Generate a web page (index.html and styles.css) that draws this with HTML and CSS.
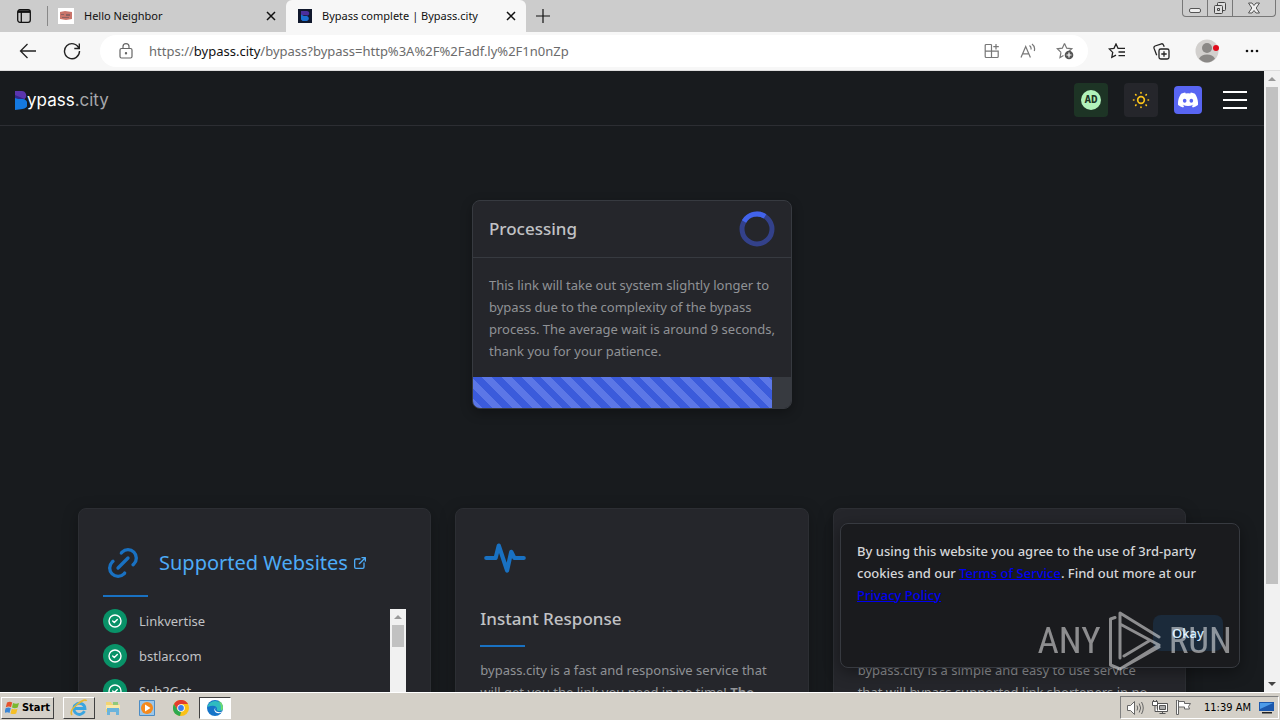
FILE: index.html
```html
<!DOCTYPE html>
<html lang="en">
<head>
<meta charset="utf-8">
<title>Bypass complete | Bypass.city</title>
<link rel="stylesheet" href="styles.css">
</head>
<body>
<div class="tabstrip">
  <button class="plain tab-menu" aria-label="Tab actions"><svg width="14" height="14" viewBox="0 0 14 14" fill="none" stroke="#111" stroke-width="1.3"><rect x=".7" y=".7" width="12.6" height="12.6" rx="2.2"/><path d="M1 2.6h12" stroke-width="2.6"/><path d="M4.3 3v10"/></svg></button>
  <div class="tab">
    <svg width="16" height="16" viewBox="0 0 16 16"><path fill="#fff" d="M0 0h16v16H0z"/><path fill="#c9746a" d="M2 4l5-1 7 1v7l-6 1-6-1z"/><path fill="#8d6060" d="M3 6h3v1H3zm5 0h4v2H8zM4 9h7v1H4z"/></svg>
    <span class="tab-title">Hello Neighbor</span>
    <button class="plain" aria-label="Close tab"><svg width="10" height="10" viewBox="0 0 10 10" stroke="#111" stroke-width="1.5"><path d="M1 1l8 8M9 1L1 9"/></svg></button>
  </div>
  <div class="tab tab-active">
    <svg width="14" height="14" viewBox="0 0 14 14"><path fill="#10182c" d="M0 0h14v14H0z"/><path fill="#4b2e9c" d="M3 2h5.500a2.400 2.400 0 0 1 1.500 4.500L3 6z"/><path fill="#1b6fd0" d="M3 5.500L6 7h3a2.600 2.600 0 0 1 0 5H4.500L3 10.500z"/></svg>
    <span class="tab-title">Bypass complete | Bypass.city</span>
    <button class="plain" aria-label="Close tab"><svg width="10" height="10" viewBox="0 0 10 10" stroke="#111" stroke-width="1.5"><path d="M1 1l8 8M9 1L1 9"/></svg></button>
  </div>
  <button class="plain new-tab" aria-label="New tab"><svg width="14" height="14" viewBox="0 0 14 14" stroke="#111" stroke-width="1.200"><path d="M7 0v14M0 7h14"/></svg></button>
  <div class="window-buttons">
    <button class="plain" aria-label="Minimize"><svg width="14" height="14" viewBox="0 0 14 14" fill="#eee" stroke="#555"><rect x="1.500" y="7.500" width="11" height="4" rx="1.500"/></svg></button>
    <button class="plain" aria-label="Restore"><svg width="14" height="14" viewBox="0 0 14 14" fill="#ddd" stroke="#444"><rect x="4.500" y="1.500" width="8" height="8" rx="1"/><rect x="1.500" y="4.500" width="8" height="8" rx="1"/><path d="M4.500 7.500h2v2h-2z"/></svg></button>
    <button class="plain wide" aria-label="Close"><svg width="14" height="14" viewBox="0 0 14 14" fill="#eee" stroke="#555"><path d="M1.500 2h3.500l2 2.500L9 2h3.500L9.200 7l3.300 5H9L7 9.500 5 12H1.500l3.300-5z"/></svg></button>
  </div>
</div>

<div class="toolbar">
  <button class="plain nav-btn" aria-label="Back"><svg width="18" height="16" viewBox="0 0 18 16" fill="none" stroke="#222" stroke-width="1.300"><path d="M17 8H1.500M8.500 1l-7 7 7 7"/></svg></button>
  <button class="plain nav-btn" aria-label="Refresh"><svg width="18" height="18" viewBox="0 0 18 18" fill="none" stroke="#222" stroke-width="1.400"><path d="M16 6.500A7.500 7.500 0 1 0 16.500 9M16.300 1.500v5h-5"/></svg></button>
  <div class="address">
    <svg width="14" height="16" viewBox="0 0 14 16" fill="none" stroke="#666" stroke-width="1.200"><rect x="1" y="5.500" width="12" height="9.500" rx="1.500"/><path d="M4 5.500V3.600a3 3 0 0 1 6 0v1.900"/><circle cx="7" cy="10.200" r=".6" fill="#666"/></svg>
    <div class="url" role="textbox" contenteditable="true" spellcheck="false" aria-label="Address">https://<span class="host">bypass.city</span>/bypass?bypass=http%3A%2F%2Fadf.ly%2F1n0nZp</div>
    <button class="plain" aria-label="Apps"><svg width="16" height="16" viewBox="0 0 16 16" fill="none" stroke="#777" stroke-width="1.200"><path d="M7.500 1.500H2.200a1 1 0 0 0-1 1v11a1 1 0 0 0 1 1h11a1 1 0 0 0 1-1V8.200H1.200M7.500 1.500v13M12 1v5.500M9.300 3.700h5.500"/></svg></button>
    <button class="plain" aria-label="Read aloud"><svg width="16" height="16" viewBox="0 0 16 16" fill="none" stroke="#777" stroke-width="1.200"><path d="M1 14.500L5.700 3.500l4.700 11M2.700 10.800h6M9.500 2.500q2 1.500 1.500 4M12 1q3.500 2.500 2.300 7"/></svg></button>
    <button class="plain" aria-label="Add favorite"><svg width="18" height="18" viewBox="0 0 18 18" fill="none" stroke="#777" stroke-width="1.200"><path d="M8.500 1.500l2.200 4.700 5.100.6-3.800 3.500M5 10.400L1.300 6.800l5-.6 2.200-4.700M5 10.400L4 15.500l3.500-2"/><circle cx="13" cy="13" r="4.300" fill="#555" stroke="none"/><path d="M13 10.500v5M10.500 13h5" stroke="#fff"/></svg></button>
  </div>
  <button class="plain tool" aria-label="Favorites"><svg width="18" height="16" viewBox="0 0 18 16" fill="none" stroke="#222" stroke-width="1.300"><path d="M10 5.300L8 1 6 5.300l-4.800.6 3.500 3.500-.9 5 4.200-2.300M9.500 5.300H17M10.500 9H17M10.500 12.700H17"/></svg></button>
  <button class="plain tool" aria-label="Collections"><svg width="17" height="17" viewBox="0 0 17 17" fill="none" stroke="#222" stroke-width="1.300"><rect x="6" y="6" width="10" height="10" rx="1.800"/><path d="M11 8.300v5.400M8.300 11h5.400M3.700 12.300L1 5.200Q.7 3.500 2 3l6.500-2.200q1.500-.2 2 1.200l.7 1.700"/></svg></button>
  <button class="plain tool" aria-label="Profile"><svg width="24" height="24" viewBox="0 0 24 24"><circle cx="12" cy="12" r="11.500" fill="#d2d0ce"/><circle cx="12" cy="9" r="5" fill="#8a8886"/><path d="M4 19.500q2.500-4 8-4t8 4q-3.500 4-8 4t-8-4z" fill="#8a8886"/><circle cx="21" cy="9" r="3" fill="#e00b1c"/></svg></button>
  <button class="plain tool" aria-label="Settings"><svg width="14" height="4" viewBox="0 0 14 4" fill="#111"><circle cx="2" cy="2" r="1.300"/><circle cx="7" cy="2" r="1.300"/><circle cx="12" cy="2" r="1.300"/></svg></button>
</div>

<div class="viewport">
  <div class="page">
    <header class="site-header">
      <a class="brand" href="#"><svg width="13" height="19" viewBox="0 0 13 19"><path fill="#5b35ad" d="M1 0h6.500a4.600 4.600 0 0 1 3 8.200L1 7z"/><path fill="#33278a" d="M1 4l9.500 4H1z"/><path fill="#1479e0" d="M1 7l3 1h4.500a4.800 4.800 0 0 1 0 10L1 19z"/></svg><span>ypass<span class="brand-dim">.city</span></span></a>
      <nav class="actions">
        <button class="square ad" aria-label="Ad settings"><span class="ad-badge"><b>AD</b></span></button>
        <button class="square theme" aria-label="Toggle theme"><svg width="20" height="20" viewBox="0 0 24 24" fill="none" stroke="#fcc419" stroke-width="2" stroke-linecap="round"><circle cx="12" cy="12" r="4"/><path d="M3 12h.5m8.500-9v.5m8.500 8.500h.5m-9 8.500v.5M5.600 5.600l.4.400m12.400-.400l-.4.400m0 12l.4.400m-12.800 0l.4-.400"/></svg></button>
        <a class="discord" href="#" aria-label="Discord"><svg width="20" height="16" viewBox="0 0 127 96"><path fill="#fff" d="M107.700 8.070A105.150 105.150 0 0 0 81.470 0a72.060 72.060 0 0 0-3.360 6.830 97.680 97.680 0 0 0-29.110 0A72.370 72.370 0 0 0 45.640 0a105.890 105.890 0 0 0-26.250 8.090C2.790 32.650-1.710 56.600.54 80.210a105.730 105.730 0 0 0 32.170 16.150 77.700 77.700 0 0 0 6.890-11.110 68.420 68.420 0 0 1-10.850-5.180c.91-.66 1.800-1.340 2.660-2a75.570 75.570 0 0 0 64.320 0c.87.71 1.760 1.390 2.660 2a68.680 68.680 0 0 1-10.870 5.190 77 77 0 0 0 6.890 11.100 105.250 105.250 0 0 0 32.190-16.140c2.640-27.380-4.510-51.110-18.900-72.150zM42.450 65.690C36.180 65.690 31 60 31 53s5-12.740 11.430-12.740S54 46 53.890 53s-5.050 12.690-11.440 12.690zm42.240 0C78.410 65.690 73.250 60 73.250 53s5-12.740 11.440-12.740S96.230 46 96.120 53s-5.040 12.690-11.430 12.690z"/></svg></a>
        <button class="plain burger" aria-label="Menu"><i></i><i></i><i></i></button>
      </nav>
    </header>

    <section class="status">
      <div class="status-head">
        <h1>Processing</h1>
        <svg width="36" height="36" viewBox="0 0 36 36" fill="none" stroke-width="5"><circle cx="18" cy="18" r="15" stroke="#33418a"/><path stroke="#4263eb" d="M5 10.500A15 15 0 0 1 26 5.300"/></svg>
      </div>
      <p>This link will take out system slightly longer to bypass due to the complexity of the bypass process. The average wait is around 9 seconds, thank you for your patience.</p>
      <div class="progress" role="progressbar" aria-label="Progress" aria-valuenow="94" aria-valuemin="0" aria-valuemax="100"><div class="bar" style="width:94%"></div></div>
    </section>

    <main class="features">
      <article class="card">
        <a class="supported" href="#">
          <svg width="40" height="40" viewBox="0 0 24 24" fill="none" stroke="#1971c2" stroke-width="2" stroke-linecap="round" stroke-linejoin="round"><path d="M9 15l6-6M11 6l.463-.536a5 5 0 0 1 7.071 7.072L18 13M13 18l-.397.534a5.068 5.068 0 0 1-7.127 0 4.972 4.972 0 0 1 0-7.071L6 11"/></svg>
          <span>Supported Websites</span>
          <svg width="16" height="16" viewBox="0 0 24 24" fill="none" stroke="#4dabf7" stroke-width="2" stroke-linecap="round" stroke-linejoin="round"><path d="M12 6H6a2 2 0 0 0-2 2v10a2 2 0 0 0 2 2h10a2 2 0 0 0 2-2v-6M11 13l9-9M15 4h5v5"/></svg>
        </a>
        <div class="rule"></div>
        <div class="site-box">
          <ul class="sites">
            <li><svg width="24" height="24" viewBox="0 0 24 24"><circle cx="12" cy="12" r="12" fill="#099268"/><g fill="none" stroke="#fff" stroke-width="1.400" stroke-linecap="round" stroke-linejoin="round"><circle cx="12" cy="12" r="6"/><path d="M9.700 12l1.600 1.600 3-3"/></g></svg>Linkvertise</li>
            <li><svg width="24" height="24" viewBox="0 0 24 24"><circle cx="12" cy="12" r="12" fill="#099268"/><g fill="none" stroke="#fff" stroke-width="1.400" stroke-linecap="round" stroke-linejoin="round"><circle cx="12" cy="12" r="6"/><path d="M9.700 12l1.600 1.600 3-3"/></g></svg>bstlar.com</li>
            <li><svg width="24" height="24" viewBox="0 0 24 24"><circle cx="12" cy="12" r="12" fill="#099268"/><g fill="none" stroke="#fff" stroke-width="1.400" stroke-linecap="round" stroke-linejoin="round"><circle cx="12" cy="12" r="6"/><path d="M9.700 12l1.600 1.600 3-3"/></g></svg>Sub2Get</li>
          </ul>
          <div class="scroll"><span class="arrow"></span><span class="thumb thumb-short"></span></div>
        </div>
      </article>
      <article class="card">
        <svg class="pulse" width="50" height="50" viewBox="0 0 24 24" fill="none" stroke="#1971c2" stroke-width="2" stroke-linecap="round" stroke-linejoin="round"><path d="M3 12h4.500L9 6l4 12 2-9 1.500 3H21"/></svg>
        <h2>Instant Response</h2>
        <div class="rule"></div>
        <p>bypass.city is a fast and responsive service that will get you the link you need in no time! <b>The</b></p>
      </article>
      <article class="card card-tail">
        <p>bypass.city is a simple and easy to use service that will bypass supported link shorteners in no</p>
      </article>
    </main>

    <div class="cookie" role="dialog" aria-label="Cookies">
      <p>By using this website you agree to the use of 3rd-party cookies and our <a href="#">Terms of Service</a>. Find out more at our <a href="#">Privacy Policy</a></p>
      <button class="okay">Okay</button>
    </div>
  </div>
  <div class="scroll"><span class="arrow"></span><span class="thumb thumb-long"></span><span class="arrow arrow-down"></span></div>
</div>

<footer class="taskbar">
  <button class="raised start"><svg width="15" height="14" viewBox="0 0 15 14"><path fill="#e5532d" d="M2 1.500q3-1.500 5.200 0L6 6.200Q4 5 .8 6.200z"/><path fill="#7ab82f" d="M8 2q3 1.400 6 0l-1.300 4.600q-3 1.300-5.700 0z"/><path fill="#3a86d6" d="M.6 7.200q3-1.300 5.200 0L4.500 12Q2.500 10.500-.6 12z"/><path fill="#f5bf25" d="M6.800 7.700q3 1.200 5.700 0l-1.300 4.700q-3 1.200-5.700 0z"/></svg>Start</button>
  <button class="raised task" aria-label="Internet Explorer"><svg width="18" height="18" viewBox="0 0 18 18" fill="none"><path d="M14.500 12.200A5.600 5.600 0 1 1 15 9.500H5" stroke="#3aa5e0" stroke-width="2.800"/><path d="M2 16Q-1 12 7 5.500T16.500 2" stroke="#e8b830" stroke-width="1.600"/></svg></button>
  <button class="plain task" aria-label="Explorer"><svg width="16" height="16" viewBox="0 0 16 16"><path fill="#f2d472" d="M1 2h5l1 2h7v8H1z"/><path fill="#8fc97a" d="M8 2h5v3H8z"/><path fill="#f9e9a8" d="M1 5h14v4H1z"/><path fill="#6bb4dc" d="M2 8h12v7h-3v-3H5v3H2z"/></svg></button>
  <button class="plain task" aria-label="Media Player"><svg width="16" height="16" viewBox="0 0 16 16"><path fill="#9cc7ea" stroke="#4c8cc4" d="M.5.5h15v15H.5z"/><circle cx="8" cy="8" r="6" fill="#f58a1d"/><path fill="#fff" d="M6 4.500l5.500 3.500L6 11.500z"/></svg></button>
  <button class="plain task" aria-label="Chrome"><svg width="16" height="16" viewBox="0 0 16 16"><circle cx="8" cy="8" r="8" fill="#fbc116"/><path fill="#e33b2e" d="M1 4.100A8 8 0 0 1 15 4H8L4.500 10z"/><path fill="#2da94f" d="M1 4.100L4.600 10 8 12l-1 4A8 8 0 0 1 1 4.100z"/><circle cx="8" cy="8" r="3.800" fill="#fff"/><circle cx="8" cy="8" r="2.900" fill="#3b7ded"/></svg></button>
  <button class="plain task pressed" aria-label="Edge"><svg width="16" height="16" viewBox="0 0 16 16"><circle cx="8" cy="8" r="8" fill="#1674c8"/><path fill="#2fbcc0" d="M.3 7A8 8 0 0 1 16 8q-.3 3.200-4 3-3-.3-2-2.300Q9 4 .3 7z"/><path fill="#6fdc6b" d="M11 .6A8 8 0 0 1 16 8q-.3 2-2 2.700Q14.500 4 11 .6z"/><path fill="#fff" d="M8.500 7.500Q7 10.500 10 11.800q3 1 5.200-.4l-.7 1.200Q11 14 8.500 12.200 6.300 10 8.500 7.500z"/></svg></button>
  <div class="tray">
    <svg width="17" height="14" viewBox="0 0 17 14" fill="#fff" stroke="#666"><path d="M.5 4.500h3l4-4v13l-4-4h-3z"/><path fill="none" d="M10 4.500q1.500 2.500 0 5M12.200 2.500q3 4.500 0 9M14.500 1q3.500 6 0 12"/></svg>
    <svg width="16" height="15" viewBox="0 0 16 15" fill="#fff" stroke="#555"><path d="M5.500 3.500h10v8h-10z"/><path fill="#aaa" d="M7.500 5.500h6v4h-6z"/><path d="M7.500 13.500h6M10.500 12v2M.5 1.500h5v4h-5zM1.500 0v2M4.500 0v2M3 6v5.500h3"/></svg>
    <svg width="16" height="15" viewBox="0 0 16 15" fill="#fff" stroke="#666"><path d="M.5 0v14.500h2V0zM2.500 1.500h6v2h6l-2 3 1 2.500h-5v-2h-6z"/></svg>
    <time>11:39 AM</time>
    <svg width="16" height="13" viewBox="0 0 16 13"><path fill="#1c58ac" d="M0 1h15v9H0z"/><path fill="#4c9be8" d="M1 2h13L1 8z"/><path fill="#222" d="M3 11h10v1.500H3z"/></svg>
  </div>
</footer>

<div class="watermark"><span>ANY</span><svg width="56" height="62" viewBox="0 0 56 62" fill="none" stroke="#fff" stroke-width="3" stroke-linejoin="round" stroke-linecap="round"><path d="M8 7.500L3.500 9v46L13 59l39-22M13 48V3l39 24M13 14l39 21M17 46l25-15M13 59l39-24"/></svg><span>RUN</span></div>
</body>
</html>
```
FILE: styles.css
```css
* { box-sizing: border-box; }
body {
  margin: 0;
  height: 100vh;
  display: flex;
  flex-direction: column;
  overflow: hidden;
  font: 13px/22px "Noto Sans", "Open Sans", sans-serif;
  background: #1a1b1e;
}
button { font: inherit; color: inherit; }
p, h1, h2, ul { margin: 0; padding: 0; }
svg { display: block; flex: none; }
.plain {
  border: 0;
  background: none;
  padding: 0;
  display: flex;
  align-items: center;
  justify-content: center;
}

/* Browser chrome */
.tabstrip {
  display: flex;
  height: 32px;
  flex: none;
  background: #cccccc;
  font-size: 11px;
  color: #111;
}
.tab-menu { width: 48px; border-right: 1px solid #888; margin: 6px 0; height: 20px; }
.tab {
  width: 238px;
  padding: 0 10px;
  display: flex;
  align-items: center;
  gap: 10px;
  flex: none;
}
.tab-title { flex: 1; white-space: nowrap; }
.tab-active { width: 240px; background: #f7f7f7; border-radius: 6px 6px 0 0; padding: 0 10px 0 12px; }
.new-tab { width: 34px; }
.window-buttons {
  margin: 0 4px 0 auto;
  display: flex;
  height: 17px;
  border: 1px solid #777;
  border-top: 0;
  border-radius: 0 0 4px 4px;
}
.window-buttons .plain { width: 25px; border-right: 1px solid #777; }
.window-buttons .wide { width: 42px; border: 0; }
.toolbar {
  display: flex;
  align-items: center;
  height: 39px;
  flex: none;
  padding: 0 6px;
  background: #f7f7f7;
  border-bottom: 1px solid #ddd;
}
.nav-btn { width: 44px; height: 32px; }
.address {
  flex: 1;
  display: flex;
  align-items: center;
  gap: 20px;
  height: 32px;
  margin: 0 6px;
  padding: 0 14px 0 19px;
  border-radius: 16px;
  background: #fff;
}
.url { flex: 1; margin-left: -4px; color: #6b6b6b; white-space: nowrap; outline: 0; }
.host { color: #111; }
.tool { width: 45px; height: 32px; }

/* Page viewport */
.viewport { flex: 1; min-height: 0; display: flex; background: #1a1b1e; }
.page { flex: 1; position: relative; overflow: hidden; background: #181b1e; color: #909296; }
.scroll {
  width: 16px;
  flex: none;
  display: flex;
  flex-direction: column;
  align-items: center;
  background: #f1f1f1;
}
.arrow { height: 16px; display: flex; align-items: center; flex: none; }
.arrow::before { content: ""; border: 4px solid transparent; border-top: 0; border-bottom-color: #999; }
.arrow-down { margin-top: auto; transform: rotate(180deg); }
.arrow-down::before { border-bottom-color: #444; }
.thumb { width: 12px; background: #c1c1c1; }
.thumb-long { height: 80%; }
.thumb-short { height: 22px; }

.site-header {
  display: flex;
  align-items: center;
  justify-content: space-between;
  height: 55px;
  padding: 4px 16px 0 14px;
  border-bottom: 1px solid #2c2e33;
}
.brand { display: flex; align-items: center; font: 17px/22px Inter, sans-serif; color: #fff; text-decoration: none; }
.brand-dim { color: #a6a7ab; }
.actions { display: flex; align-items: center; gap: 16px; }
.square {
  width: 34px;
  height: 34px;
  padding: 0;
  border: 0;
  border-radius: 4px;
  display: grid;
  place-items: center;
}
.ad { background: #1d3425; }
.theme { background: #25262b; }
.ad-badge {
  width: 20px;
  height: 20px;
  border-radius: 50%;
  background: #b2f2bb;
  color: #1d3425;
  font: 11px/20px "DejaVu Sans Mono", monospace;
}
.discord { width: 28px; height: 28px; border-radius: 4px; background: #5865f2; display: grid; place-items: center; }
.burger { width: 26px; height: 20px; flex-direction: column; justify-content: space-between; margin-left: 4px; padding: 1px; }
.burger i { width: 24px; height: 2px; background: #fff; }

.status {
  width: 320px;
  margin: 74px auto 99px;
  border: 1px solid #373a40;
  border-radius: 8px;
  overflow: hidden;
  background: #25262b;
  box-shadow: 0 4px 12px rgba(0, 0, 0, .3);
}
.status-head {
  display: flex;
  align-items: center;
  justify-content: space-between;
  height: 57px;
  padding: 0 16px;
  border-bottom: 1px solid #373a40;
}
h1, h2 { font-size: 17px; line-height: 28px; font-weight: 500; color: #c1c2c5; }
.status p { padding: 16px 14px 15px 16px; }
.progress { height: 31px; background: #373a40; }
.bar {
  height: 100%;
  background: repeating-linear-gradient(45deg, #5c77e6 0 7px, #3b5bdb 7px 14px);
}

.features {
  display: grid;
  grid-template-columns: repeat(3, 1fr);
  gap: 24px;
  max-width: 1140px;
  margin: 0 auto;
  padding: 0 16px;
}
.card {
  min-height: 320px;
  padding: 24px;
  border: 1px solid #2c2e33;
  border-radius: 8px;
  background: #25262b;
  box-shadow: 0 4px 16px rgba(0, 0, 0, .3);
}
.supported {
  display: flex;
  align-items: center;
  gap: 4px;
  margin-top: 10px;
  color: #4dabf7;
  font-size: 20px;
  line-height: 40px;
  text-decoration: none;
}
.supported span { margin-left: 12px; }
.rule { width: 45px; height: 2px; margin: 12px 0; background: #1971c2; }
.site-box { display: flex; height: 240px; overflow: hidden; }
.sites { flex: 1; list-style: none; display: flex; flex-direction: column; gap: 11px; color: #c1c2c5; }
.sites li { display: flex; align-items: center; gap: 12px; line-height: 24px; }
.pulse { margin-bottom: 22px; }
.card-tail { padding-top: 150px; }

.cookie {
  position: absolute;
  right: 24px;
  bottom: 24px;
  width: 400px;
  padding: 16px;
  border: 1px solid #373a40;
  border-radius: 8px;
  background: #1a1b1e;
  box-shadow: 0 4px 16px rgba(0, 0, 0, .4);
  color: #d5d6d9;
  font-weight: 500;
}
.cookie a { color: #0000ee; }
.okay {
  display: block;
  margin: 9px 0 0 auto;
  width: 70px;
  height: 36px;
  border: 0;
  border-radius: 8px;
  background: #1b2a3a;
  color: #d0ebff;
}

/* Taskbar */
.taskbar {
  display: flex;
  align-items: center;
  gap: 2px;
  height: 28px;
  flex: none;
  padding: 2px 1px 0;
  background: #d4d0c8;
  border-top: 1px solid #fff;
}
.raised {
  border: 1px solid;
  border-color: #fff #404040 #404040 #fff;
  background: #d4d0c8;
  display: flex;
  align-items: center;
  justify-content: center;
  height: 22px;
  padding: 0;
}
.start { width: 53px; gap: 2px; margin-right: 7px; font: bold 11px/20px "DejaVu Sans Condensed", "DejaVu Sans", sans-serif; }
.task { width: 32px; height: 22px; }
.pressed { border: 1px solid; border-color: #404040 #fff #fff #404040; background: #fff; }
.tray {
  margin-left: auto;
  display: flex;
  align-items: center;
  gap: 8px;
  height: 23px;
  padding: 0 3px 0 6px;
  border: 1px solid;
  border-color: #808080 #fff #fff #808080;
  font: 11px/20px "DejaVu Sans Condensed", "DejaVu Sans", sans-serif;
  color: #000;
}
.tray time { margin-left: 4px; white-space: nowrap; }

/* Overlay logo */
.watermark {
  position: fixed;
  right: 48px;
  bottom: 48px;
  display: flex;
  align-items: center;
  gap: 6px;
  opacity: .5;
  color: #fff;
  font: 37px/62px "Liberation Sans Narrow", "Roboto Condensed", "Open Sans Condensed", Roboto, sans-serif;
  pointer-events: none;
}
```
